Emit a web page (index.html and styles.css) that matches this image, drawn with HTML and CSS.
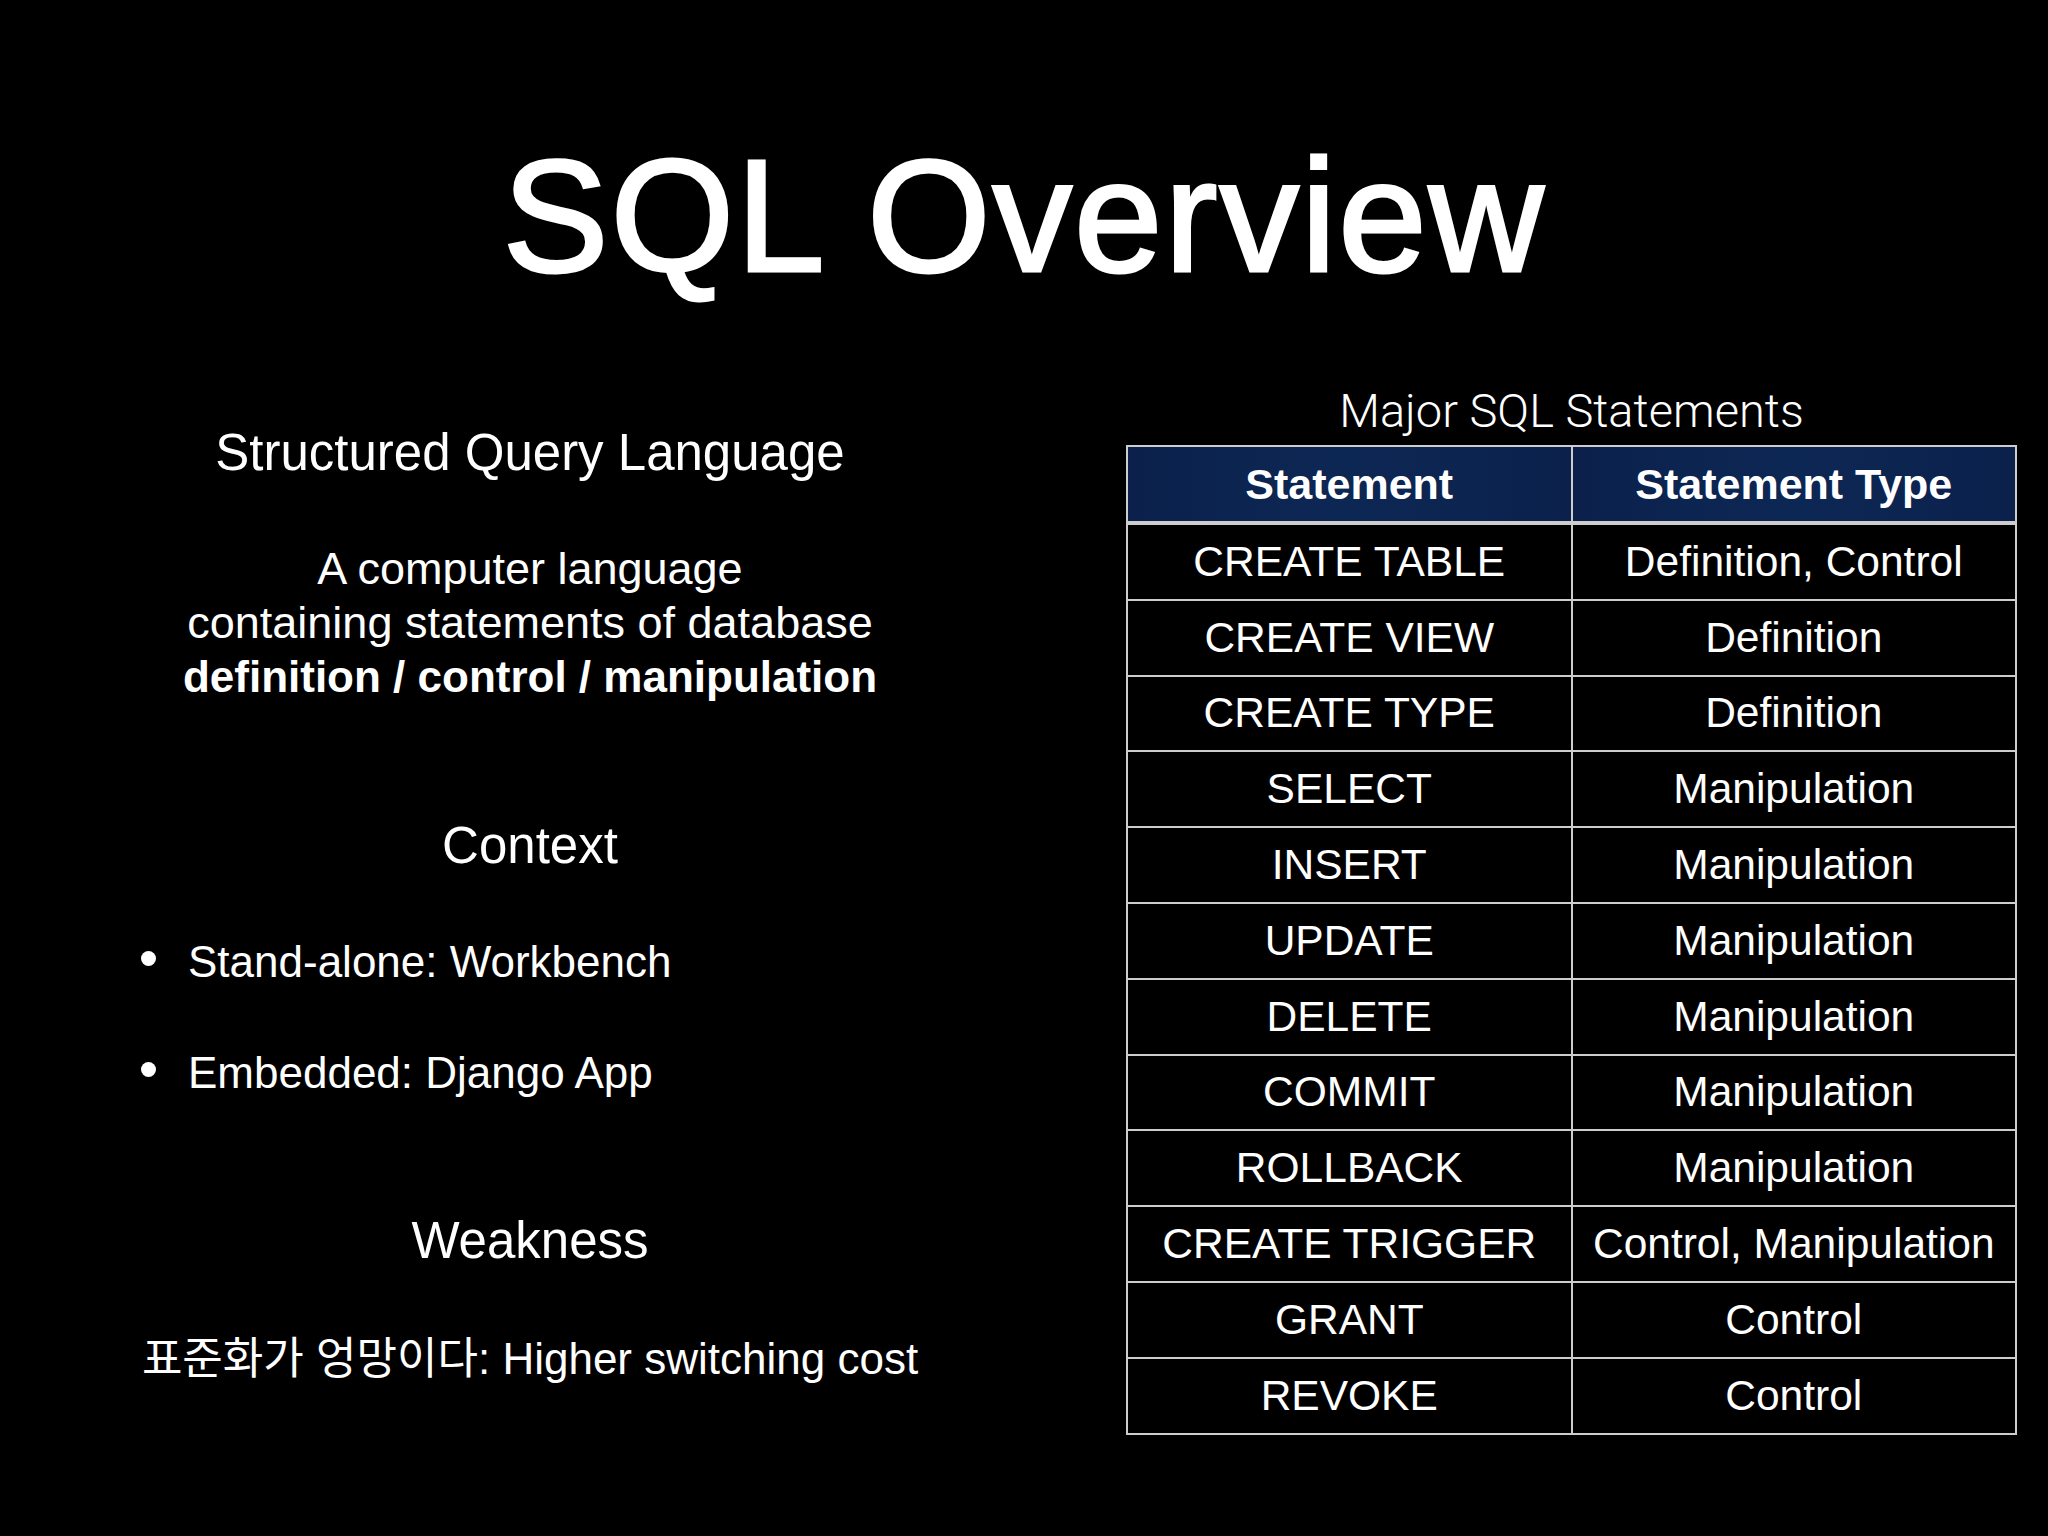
FILE: index.html
```html
<!DOCTYPE html>
<html lang="en">
<head>
<meta charset="utf-8">
<title>SQL Overview</title>
<link rel="stylesheet" href="styles.css">
</head>
<body>
<div class="slide">
  <h1 class="title">SQL Overview</h1>
  <div class="main">
    <section class="left">
      <h2 class="heading">Structured Query Language</h2>
      <p class="desc">A computer language<br>containing statements of database<br><strong>definition / control / manipulation</strong></p>
      <h2 class="heading heading-context">Context</h2>
      <ul class="bullets">
        <li class="bullet">Stand-alone: Workbench</li>
        <li class="bullet">Embedded: Django App</li>
      </ul>
      <h2 class="heading heading-weak">Weakness</h2>
      <p class="weak-text">표준화가 엉망이다: Higher switching cost</p>
    </section>
    <section class="right">
      <div class="caption">Major SQL Statements</div>
      <table class="sql-table">
        <thead>
          <tr><th>Statement</th><th>Statement Type</th></tr>
        </thead>
        <tbody>
          <tr><td>CREATE TABLE</td><td>Definition, Control</td></tr>
          <tr><td>CREATE VIEW</td><td>Definition</td></tr>
          <tr><td>CREATE TYPE</td><td>Definition</td></tr>
          <tr><td>SELECT</td><td>Manipulation</td></tr>
          <tr><td>INSERT</td><td>Manipulation</td></tr>
          <tr><td>UPDATE</td><td>Manipulation</td></tr>
          <tr><td>DELETE</td><td>Manipulation</td></tr>
          <tr><td>COMMIT</td><td>Manipulation</td></tr>
          <tr><td>ROLLBACK</td><td>Manipulation</td></tr>
          <tr><td>CREATE TRIGGER</td><td>Control, Manipulation</td></tr>
          <tr><td>GRANT</td><td>Control</td></tr>
          <tr><td>REVOKE</td><td>Control</td></tr>
        </tbody>
      </table>
    </section>
  </div>
</div>
</body>
</html>
```

FILE: styles.css
```css
html, body {
  margin: 0;
  padding: 0;
  background: #000;
}

body {
  width: 2048px;
  height: 1536px;
  overflow: hidden;
  color: #fff;
  font-family: "Liberation Sans", Arial, "Noto Sans CJK KR", sans-serif;
}

.slide {
  width: 2048px;
  height: 1536px;
  display: flex;
  flex-direction: column;
}

.title {
  margin: 136px 0 0 0;
  font-size: 159px;
  line-height: 160px;
  font-weight: normal;
  letter-spacing: 2px;
  -webkit-text-stroke: 3px #fff;
  text-align: center;
}

.main {
  display: flex;
  gap: 66px;
  margin-top: 87px;
}

.left {
  width: 1060px;
  display: flex;
  flex-direction: column;
  text-align: center;
  padding-top: 40px;
}

.heading {
  margin: 0;
  font-size: 51px;
  line-height: 60px;
  font-weight: normal;
}

.desc {
  margin: 59px 0 0 0;
  font-size: 45px;
  line-height: 54px;
}

.desc strong {
  font-weight: bold;
  font-size: 44px;
}

.heading-context {
  margin-top: 112px;
}

.bullets {
  list-style: none;
  margin: 59px 0 0 0;
  padding: 0 0 0 141px;
  display: flex;
  flex-direction: column;
  gap: 57px;
  text-align: left;
}

.bullet {
  display: flex;
  align-items: center;
  font-size: 44px;
  line-height: 54px;
}

.bullet::before {
  content: "";
  width: 15px;
  height: 15px;
  border-radius: 50%;
  background: #fff;
  margin-right: 32px;
  margin-bottom: 7px;
  flex: none;
}

.heading-weak {
  margin-top: 111px;
}

.weak-text {
  margin: 61px 0 0 0;
  font-size: 44px;
  line-height: 54px;
}

.right {
  width: 891px;
  display: flex;
  flex-direction: column;
}

.caption {
  font-family: "Roboto", "Liberation Sans", sans-serif;
  font-weight: 300;
  font-size: 47px;
  line-height: 56px;
  text-align: center;
  margin-bottom: 6px;
}

.sql-table {
  width: 891px;
  border-collapse: collapse;
  table-layout: fixed;
  border: 2px solid #cdcdcd;
}

.sql-table th,
.sql-table td {
  border: 2px solid #cdcdcd;
  text-align: center;
  vertical-align: middle;
  padding: 0;
  white-space: nowrap;
}

.sql-table th {
  height: 74px;
  background: linear-gradient(90deg, #0b214c, #0d2754 50%, #0b214c);
  font-size: 43px;
  font-weight: bold;
  border-bottom: 4px solid #cdcdcd;
}

.sql-table td {
  height: 73.8px;
  font-size: 42.5px;
}
```
